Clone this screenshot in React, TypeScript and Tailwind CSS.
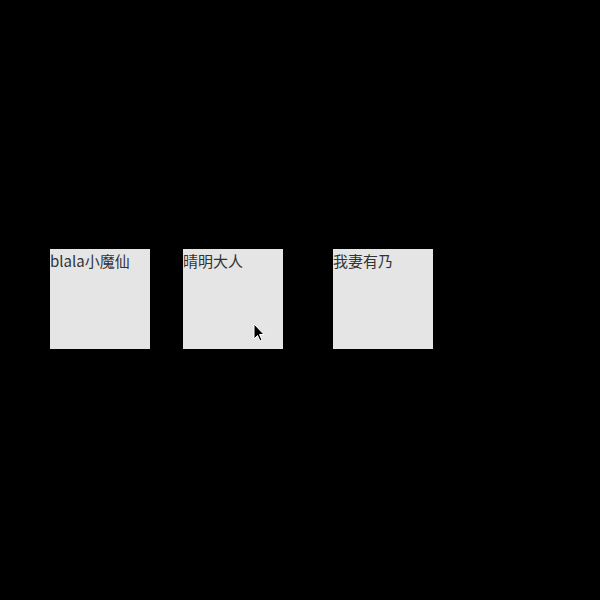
export default function App() {
  return (
    <div className="relative w-[600px] h-[600px] bg-black" style={{ fontFamily: '"Noto Sans CJK SC", "Noto Sans", sans-serif' }}>
      <div className="flex pt-[249px] pl-[50px]">
        <div className="w-[100px] h-[100px] bg-[#e5e5e5] text-[15px] leading-[24px] text-[#333]">blala小魔仙</div>
        <div className="w-[100px] h-[100px] bg-[#e5e5e5] text-[15px] leading-[24px] text-[#333] ml-[33px]">晴明大人</div>
        <div className="w-[100px] h-[100px] bg-[#e5e5e5] text-[15px] leading-[24px] text-[#333] ml-[50px]">我妻有乃</div>
      </div>
      <svg className="absolute left-[253px] top-[323px]" width="13" height="20" viewBox="0 0 13 20">
        <path d="M1 1 L1 16 L4.5 12.5 L7 18 L9 17 L6.5 11.5 L11 11.5 Z" fill="#000" stroke="#fff" strokeWidth="1" />
      </svg>
    </div>
  );
}
